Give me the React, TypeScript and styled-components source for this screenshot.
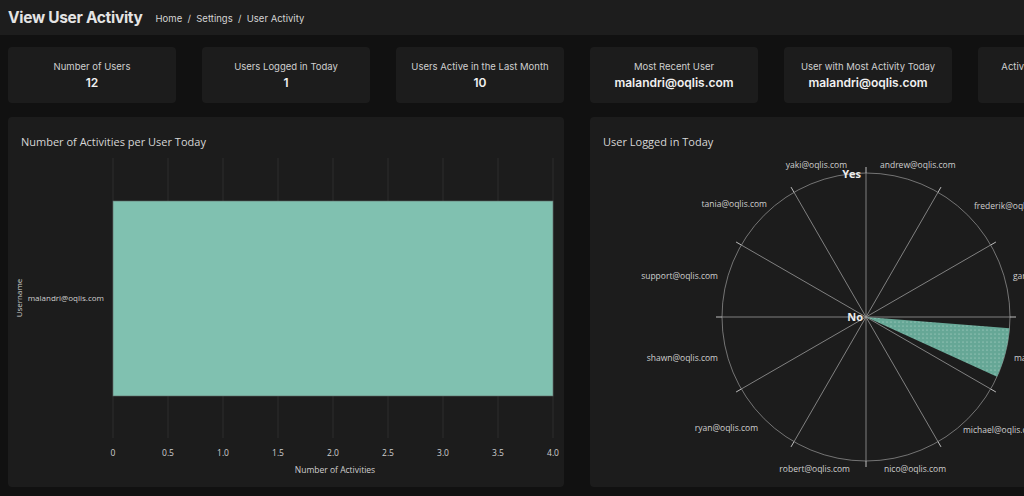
import styled, { createGlobalStyle } from "styled-components";

const stats = [
  { label: "Number of Users", value: "12" },
  { label: "Users Logged in Today", value: "1" },
  { label: "Users Active in the Last Month", value: "10" },
  { label: "Most Recent User", value: "malandri@oqlis.com" },
  { label: "User with Most Activity Today", value: "malandri@oqlis.com" },
  { label: "Activities in the Last Month", value: "37" },
];

const ticks = ["0", "0.5", "1.0", "1.5", "2.0", "2.5", "3.0", "3.5", "4.0"];

// polar labels, coords local to the chart svg
const users = [
  { name: "yaki@oqlis.com", x: 257, y: 12, anchor: "end" },
  { name: "andrew@oqlis.com", x: 290, y: 12, anchor: "start" },
  { name: "tania@oqlis.com", x: 177, y: 51, anchor: "end" },
  { name: "frederik@oqlis.com", x: 384, y: 53, anchor: "start" },
  { name: "support@oqlis.com", x: 128, y: 123, anchor: "end" },
  { name: "gary@oqlis.com", x: 423, y: 123, anchor: "start" },
  { name: "shawn@oqlis.com", x: 128, y: 205, anchor: "end" },
  { name: "malandri@oqlis.com", x: 424, y: 205, anchor: "start" },
  { name: "ryan@oqlis.com", x: 168, y: 275, anchor: "end" },
  { name: "michael@oqlis.com", x: 373, y: 277, anchor: "start" },
  { name: "robert@oqlis.com", x: 260, y: 316, anchor: "end" },
  { name: "nico@oqlis.com", x: 294, y: 316, anchor: "start" },
];

const CX = 276;
const CY = 164;
const R = 144;

function pt(deg: number, r: number) {
  const a = (deg * Math.PI) / 180;
  return { x: CX + r * Math.sin(a), y: CY - r * Math.cos(a) };
}

function App() {
  const spokes = Array.from({ length: 12 }, (_, i) => i * 30);
  const w0 = pt(94.5, R);
  const w1 = pt(114.5, R);

  return (
    <Page>
      <GlobalStyle />
      <Header>
        <Title>View User Activity</Title>
        <Crumbs>Home&nbsp;&nbsp;/&nbsp;&nbsp;Settings&nbsp;&nbsp;/&nbsp;&nbsp;User Activity</Crumbs>
      </Header>
      <Content>
        <StatsRow>
          {stats.map((s) => (
            <StatCard key={s.label}>
              <StatLabel>{s.label}</StatLabel>
              <StatValue>{s.value}</StatValue>
            </StatCard>
          ))}
        </StatsRow>
        <ChartsRow>
          <Panel>
            <PanelTitle>Number of Activities per User Today</PanelTitle>
            <ChartSvg width={556} height={334}>
              {ticks.map((t, i) => (
                <line key={t} x1={105 + i * 55} x2={105 + i * 55} y1={5} y2={285} stroke="#2c2c2c" strokeWidth={1} />
              ))}
              <rect x={105} y={48} width={440} height={195} fill="#80c1b0" stroke="#5f6a67" strokeWidth={0.6} />
              {ticks.map((t, i) => (
                <text key={t} x={105 + i * 55} y={303} textAnchor="middle" fontSize={8.5} fill="#cfcfcf">
                  {t}
                </text>
              ))}
              <text x={327} y={320} textAnchor="middle" fontSize={8.5} fill="#cfcfcf">
                Number of Activities
              </text>
              <text x={96} y={148} textAnchor="end" fontSize={8} fill="#cfcfcf">
                malandri@oqlis.com
              </text>
              <text x={14} y={145} textAnchor="middle" fontSize={8} fill="#cfcfcf" transform="rotate(-90 14 145)">
                Username
              </text>
            </ChartSvg>
          </Panel>
          <Panel>
            <PanelTitle>User Logged in Today</PanelTitle>
            <ChartSvg width={556} height={334}>
              <defs>
                <pattern id="dots" width="4" height="4" patternUnits="userSpaceOnUse">
                  <rect width="4" height="4" fill="#66a796" />
                  <circle cx="1" cy="1" r="0.5" fill="#cfe6de" />
                </pattern>
              </defs>
              <circle cx={CX} cy={CY} r={R} fill="none" stroke="#8a8a8a" strokeWidth={0.8} />
              <path
                d={`M${CX} ${CY} L${w0.x} ${w0.y} A${R} ${R} 0 0 1 ${w1.x} ${w1.y} Z`}
                fill="url(#dots)"
              />
              {spokes.map((d) => {
                const e = pt(d, R);
                const t = pt(d, R + 6);
                return (
                  <g key={d}>
                    <line x1={CX} y1={CY} x2={e.x} y2={e.y} stroke="#9a9a9a" strokeWidth={0.8} />
                    <line x1={e.x} y1={e.y} x2={t.x} y2={t.y} stroke="#bdbdbd" strokeWidth={1} />
                  </g>
                );
              })}
              {users.map((u) => (
                <text key={u.name} x={u.x} y={u.y + 3} textAnchor={u.anchor} fontSize={8.5} fill="#cfcfcf">
                  {u.name}
                </text>
              ))}
              <text x={271} y={25} textAnchor="end" fontSize={11} fontWeight={700} fill="#ececec">
                Yes
              </text>
              <text x={273} y={168} textAnchor="end" fontSize={11} fontWeight={700} fill="#ececec">
                No
              </text>
            </ChartSvg>
          </Panel>
        </ChartsRow>
      </Content>
    </Page>
  );
}

const GlobalStyle = createGlobalStyle`
  html, body {
    margin: 0;
    background-color: #111111;
    overflow: hidden;
  }
`;

const Page = styled.div`
  width: 1154px;
  height: 496px;
  background-color: #111111;
  font-family: Inter, "Liberation Sans", sans-serif;
`;

const Header = styled.header`
  height: 35px;
  display: flex;
  align-items: center;
  gap: 13px;
  padding: 0 8px;
  background-color: #1d1d1d;
`;

const Title = styled.h1`
  margin: 0;
  font-size: 15.5px;
  font-weight: 700;
  color: #e4e4e4;
  letter-spacing: -0.3px;
`;

const Crumbs = styled.div`
  font-size: 9.5px;
  color: #d4d4d4;
  padding-top: 1px;
`;

const Content = styled.main`
  padding: 12px 8px 0;
`;

const StatsRow = styled.div`
  display: grid;
  grid-template-columns: repeat(6, 168px);
  gap: 26px;
`;

const StatCard = styled.div`
  height: 56px;
  border-radius: 4px;
  background-color: #1c1c1c;
  display: flex;
  flex-direction: column;
  align-items: center;
  justify-content: center;
  gap: 3px;
`;

const StatLabel = styled.div`
  font-size: 9.5px;
  color: #cfcfcf;
`;

const StatValue = styled.div`
  font-size: 12px;
  font-weight: 600;
  color: #f0f0f0;
`;

const ChartsRow = styled.div`
  display: grid;
  grid-template-columns: repeat(2, 556px);
  gap: 26px;
  margin-top: 14px;
`;

const Panel = styled.section`
  height: 370px;
  border-radius: 4px;
  background-color: #1c1c1c;
  display: flex;
  flex-direction: column;
  font-family: "Open Sans", "Liberation Sans", sans-serif;
`;

const PanelTitle = styled.h2`
  margin: 0;
  height: 36px;
  box-sizing: border-box;
  padding: 17px 0 0 13px;
  font-size: 11px;
  font-weight: 400;
  color: #d6d6d6;
`;

const ChartSvg = styled.svg`
  display: block;
  font-family: "Open Sans", "Liberation Sans", sans-serif;
`;

export default App;
